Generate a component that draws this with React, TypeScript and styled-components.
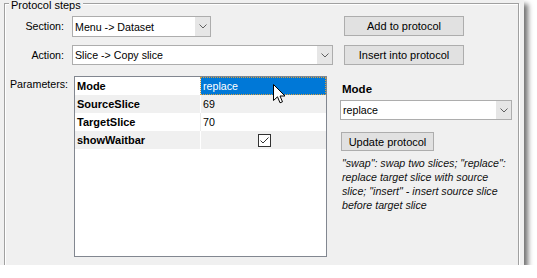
import React from 'react';
import styled, { createGlobalStyle } from 'styled-components';

const GlobalStyle = createGlobalStyle`
  html, body {
    margin: 0;
    padding: 0;
    background: #fff;
  }
  body {
    font-family: 'Liberation Sans', Arial, sans-serif;
    font-size: 10.67px;
    color: #000;
  }
`;

const Window = styled.div`
  position: relative;
  width: 524px;
  height: 265px;
  background: #f0f0f0;
  overflow: hidden;
  box-shadow: 4px 4px 5px rgba(0, 0, 0, 0.55);
`;

const Group = styled.div`
  position: relative;
  margin: 3px 0 0 4px;
  width: 515px;
  height: 290px;
  box-sizing: border-box;
  border: 1px solid #a0a0a0;
  box-shadow: 1px 1px 0 #fff, inset 1px 1px 0 #fff;
  padding: 12px 0 0 3px;
`;

const GroupTitle = styled.div`
  position: absolute;
  top: -5px;
  left: 4px;
  padding: 0 2px;
  background: #f0f0f0;
  font-size: 11px;
  line-height: 13px;
`;

const Row = styled.div<{ $top?: number }>`
  display: flex;
  align-items: flex-start;
  margin-top: ${({ $top }) => $top ?? 0}px;
`;

const Label = styled.div<{ $h: number }>`
  width: 56px;
  margin-right: 8px;
  text-align: right;
  line-height: ${({ $h }) => $h}px;
  white-space: nowrap;
`;

const Select = styled.div<{ $w: number; $h: number; $top?: number }>`
  display: flex;
  width: ${({ $w }) => $w}px;
  height: ${({ $h }) => $h}px;
  margin-top: ${({ $top }) => $top ?? 0}px;
  box-sizing: border-box;
  border: 1px solid #adadad;
  background: #fff;
`;

const SelectText = styled.div`
  flex: 1;
  padding-left: 2px;
  display: flex;
  align-items: center;
  white-space: nowrap;
  overflow: hidden;
`;

const SelectArrow = styled.div`
  width: 15px;
  display: flex;
  align-items: center;
  justify-content: center;
  background: #e6e6e6;
`;

const Button = styled.div<{ $w: number; $h: number; $left?: number; $top?: number }>`
  width: ${({ $w }) => $w}px;
  height: ${({ $h }) => $h}px;
  margin-left: ${({ $left }) => $left ?? 0}px;
  margin-top: ${({ $top }) => $top ?? 0}px;
  box-sizing: border-box;
  border: 1px solid #adadad;
  background: #e1e1e1;
  font-size: 11px;
  display: flex;
  align-items: center;
  justify-content: center;
  white-space: nowrap;
`;

const ParamLabel = styled.div`
  width: 64px;
  padding: 2px 0 0 2px;
  line-height: 13px;
`;

const Table = styled.div`
  width: 253px;
  height: 181px;
  box-sizing: border-box;
  border: 1px solid #828790;
  background: #fff;
`;

const TableRow = styled.div<{ $alt: boolean }>`
  display: flex;
  height: 18px;
  background: ${({ $alt }) => ($alt ? '#f0f0f0' : '#fff')};
`;

const NameCell = styled.div`
  width: 123px;
  padding-left: 2px;
  font-weight: bold;
  font-size: 11px;
  line-height: 18px;
`;

const ValueCell = styled.div<{ $alt: boolean; $selected?: boolean; $center?: boolean }>`
  flex: 1;
  box-sizing: border-box;
  border-left: 1px solid ${({ $alt }) => ($alt ? '#fff' : '#ececec')};
  padding-left: 2px;
  display: flex;
  align-items: center;
  justify-content: ${({ $center }) => ($center ? 'center' : 'flex-start')};
  background: ${({ $selected }) => ($selected ? '#0078d7' : 'transparent')};
  color: ${({ $selected }) => ($selected ? '#fff' : '#000')};
  outline: ${({ $selected }) => ($selected ? '1px dotted #d8a040' : 'none')};
  outline-offset: -1px;
`;

const CheckBox = styled.div`
  width: 13px;
  height: 13px;
  box-sizing: border-box;
  border: 1px solid #333;
  background: #fff;
  display: flex;
  align-items: center;
  justify-content: center;
`;

const Side = styled.div`
  margin-left: 13px;
  width: 178px;
  display: flex;
  flex-direction: column;
  align-items: flex-start;
`;

const SideLabel = styled.div`
  margin-top: 6px;
  padding-left: 2px;
  font-weight: bold;
  font-size: 11.5px;
  line-height: 14px;
`;

const Description = styled.div`
  margin-top: 5px;
  padding-left: 2px;
  width: 173px;
  font-style: italic;
  line-height: 14px;
  color: #111;
`;

const Cursor = styled.svg`
  position: absolute;
  left: 273px;
  top: 84px;
`;

const Chevron = () => (
  <svg width="8" height="5" viewBox="0 0 8 5">
    <polyline points="0.5,0.5 4,4 7.5,0.5" fill="none" stroke="#606060" strokeWidth="1" />
  </svg>
);

const Dropdown: React.FC<{ w: number; h: number; value: string; top?: number }> = ({ w, h, value, top }) => (
  <Select $w={w} $h={h} $top={top}>
    <SelectText>{value}</SelectText>
    <SelectArrow>
      <Chevron />
    </SelectArrow>
  </Select>
);

const params = [
  { name: 'Mode', value: 'replace' },
  { name: 'SourceSlice', value: '69' },
  { name: 'TargetSlice', value: '70' },
  { name: 'showWaitbar', value: true },
];

export default function App() {
  return (
    <>
      <GlobalStyle />
      <Window>
        <Group>
          <GroupTitle>Protocol steps</GroupTitle>
          <Row>
            <Label $h={21}>Section:</Label>
            <Dropdown w={139} h={21} value="Menu -> Dataset" />
            <Button $w={120} $h={20} $left={133}>Add to protocol</Button>
          </Row>
          <Row $top={8}>
            <Label $h={20}>Action:</Label>
            <Dropdown w={261} h={20} value="Slice -> Copy slice" />
            <Button $w={120} $h={20} $left={11}>Insert into protocol</Button>
          </Row>
          <Row $top={11}>
            <ParamLabel>Parameters:</ParamLabel>
            <Table>
              {params.map((p, i) => {
                const alt = i % 2 === 1;
                return (
                  <TableRow key={p.name} $alt={alt}>
                    <NameCell>{p.name}</NameCell>
                    {typeof p.value === 'boolean' ? (
                      <ValueCell $alt={alt} $center>
                        <CheckBox>
                          <svg width="11" height="11" viewBox="0 0 11 11">
                            <polyline points="1.5,5.5 4,8 9.5,2.5" fill="none" stroke="#333" strokeWidth="1" />
                          </svg>
                        </CheckBox>
                      </ValueCell>
                    ) : (
                      <ValueCell $alt={alt} $selected={i === 0}>{p.value}</ValueCell>
                    )}
                  </TableRow>
                );
              })}
            </Table>
            <Side>
              <SideLabel>Mode</SideLabel>
              <Dropdown w={172} h={20} value="replace" top={4} />
              <Button $w={93} $h={19} $left={1} $top={12}>Update protocol</Button>
              <Description>
                "swap": swap two slices; "replace": replace target slice with source slice; "insert" - insert source slice before target slice
              </Description>
            </Side>
          </Row>
        </Group>
        <Cursor width="13" height="20" viewBox="0 0 13 20">
          <path d="M0.5 0.5 L0.5 16.5 L4.5 12.8 L7 18.8 L9.5 17.8 L7 12 L12 12 Z" fill="#fff" stroke="#000" strokeWidth="1" strokeLinejoin="miter" />
        </Cursor>
      </Window>
    </>
  );
}
